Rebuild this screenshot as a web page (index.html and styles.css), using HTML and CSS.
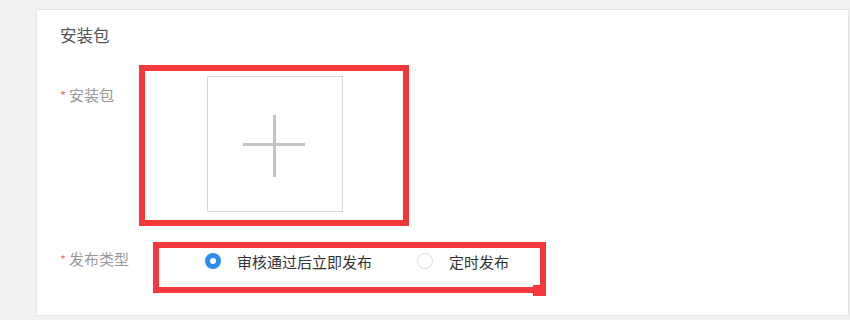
FILE: index.html
```html
<!DOCTYPE html>
<html lang="zh">
<head>
<meta charset="utf-8">
<link rel="stylesheet" href="styles.css">
</head>
<body>
<div class="card">
  <div class="title">安装包</div>
  <div class="row row-upload">
    <div class="label"><span class="req">*</span>安装包</div>
    <div class="mark mark-upload">
      <div class="upload">
        <span class="plus-v"></span>
        <span class="plus-h"></span>
      </div>
    </div>
  </div>
  <div class="row row-type">
    <div class="label"><span class="req">*</span>发布类型</div>
    <div class="mark mark-type">
      <label class="radio"><span class="dot checked"></span>审核通过后立即发布</label>
      <label class="radio"><span class="dot"></span>定时发布</label>
    </div>
  </div>
</div>
</body>
</html>
```

FILE: styles.css
```css
html, body {
  margin: 0;
  padding: 0;
}
body {
  background: #f2f2f2;
  font-family: "Noto Sans CJK SC", "Noto Sans", sans-serif;
  width: 850px;
  height: 320px;
  overflow: hidden;
}
.card {
  box-sizing: border-box;
  margin: 9px 0 0 36px;
  width: 813px;
  height: 307px;
  background: #fff;
  border: 1px solid #e4e4e4;
  padding: 14px 0 0 23px;
}
.title {
  font-size: 16.5px;
  line-height: 22px;
  color: #555;
}
.row {
  display: flex;
  align-items: flex-start;
}
.row-upload {
  margin-top: 19px;
}
.row-type {
  margin-top: 16px;
}
.label {
  font-size: 15px;
  line-height: 20px;
  color: #999;
  white-space: nowrap;
}
.row-upload .label {
  width: 79px;
  padding-top: 20px;
}
.row-type .label {
  width: 93px;
  padding-top: 7px;
}
.req {
  color: #f07a7a;
  font-size: 13px;
  margin-right: 3px;
}
.mark {
  border: 6px solid #f4393d;
  box-sizing: border-box;
}
.mark-upload {
  width: 270px;
  height: 161px;
  padding: 5px 0 0 62px;
}
.upload {
  position: relative;
  box-sizing: border-box;
  width: 136px;
  height: 136px;
  border: 1px solid #d6d6dc;
  background: #fff;
}
.plus-v {
  position: absolute;
  left: 65px;
  top: 38px;
  width: 3px;
  height: 62px;
  background: #c4c4c4;
}
.plus-h {
  position: absolute;
  left: 35px;
  top: 66px;
  width: 62px;
  height: 3px;
  background: #c4c4c4;
}
.mark-type {
  position: relative;
  width: 393px;
  height: 51px;
  padding: 4px 0 0 46px;
  display: flex;
  align-items: flex-start;
}
.mark-type::after {
  content: "";
  position: absolute;
  right: -6px;
  bottom: -9px;
  width: 13px;
  height: 11px;
  background: #f4393d;
}
.radio {
  display: flex;
  align-items: center;
  font-size: 15px;
  line-height: 20px;
  color: #333;
}
.radio + .radio {
  margin-left: 45px;
}
.dot {
  box-sizing: border-box;
  width: 16px;
  height: 16px;
  border-radius: 50%;
  border: 1px solid #dcdee2;
  background: #fff;
  margin-right: 16px;
  margin-top: -2px;
}
.dot.checked {
  border: 5px solid #2d8cf0;
}
```
